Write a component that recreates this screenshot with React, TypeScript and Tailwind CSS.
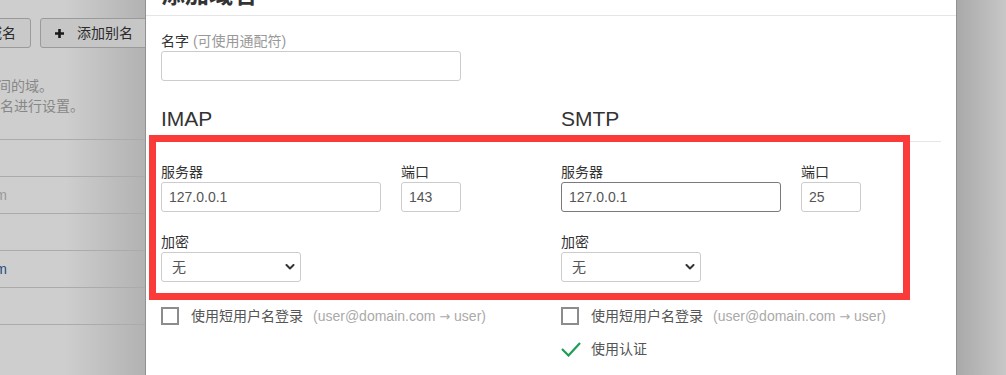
import React from 'react';

const font = "font-['Liberation_Sans','Noto_Sans_CJK_SC',sans-serif]";

function Chevron() {
  return (
    <svg width="10" height="6" viewBox="0 0 10 6" className="shrink-0">
      <path d="M1.5 1 L5 4.5 L8.5 1" fill="none" stroke="#333" strokeWidth="2" strokeLinecap="round" strokeLinejoin="round" />
    </svg>
  );
}

function TextInput({ value, width, dark }: { value?: string; width: string; dark?: boolean }) {
  return (
    <input
      readOnly
      value={value ?? ''}
      className={`${width} h-[30px] rounded-[3px] border ${dark ? 'border-[#7a7a7a]' : 'border-[#cccccc]'} bg-white pl-[7px] text-[14px] text-[#555] outline-none`}
    />
  );
}

function FakeSelect() {
  return (
    <div className="flex h-[30px] w-[140px] items-center justify-between rounded-[3px] border border-[#cccccc] bg-white pl-[10px] pr-[5px] text-[14px] text-[#555]">
      <span>无</span>
      <Chevron />
    </div>
  );
}

function ServerFields({ port, dark }: { port: string; dark?: boolean }) {
  return (
    <div className="flex flex-col">
      <div className="flex gap-[20px]">
        <div className="flex flex-col">
          <label className="leading-[20px] text-[14px] text-[#333]">服务器</label>
          <TextInput value="127.0.0.1" width="w-[220px]" dark={dark} />
        </div>
        <div className="flex flex-col">
          <label className="leading-[20px] text-[14px] text-[#333]">端口</label>
          <TextInput value={port} width="w-[60px]" />
        </div>
      </div>
      <label className="mt-[20px] leading-[20px] text-[14px] text-[#333]">加密</label>
      <FakeSelect />
    </div>
  );
}

function ShortLogin() {
  return (
    <div className="flex h-[20px] items-center text-[14px]">
      <span className="h-[18px] w-[18px] border-2 border-[#8c8c8c] bg-white" />
      <span className="ml-[12px] text-[#555]">使用短用户名登录</span>
      <span className="ml-[10px] whitespace-nowrap text-[#aaaaaa]">
        (user@domain.com <span className="font-['DejaVu_Sans',sans-serif] text-[13px]">→</span> user)
      </span>
    </div>
  );
}

function Backdrop() {
  const rows = [
    { text: '', color: '' },
    { text: 'postmaster@example.com', color: 'text-[#999]' },
    { text: '', color: '' },
    { text: 'admin@example.com', color: 'text-[#1e4e7c]' },
    { text: '', color: '' },
  ];
  return (
    <aside className="w-[145px] shrink-0 overflow-hidden bg-linear-to-r from-[#cecece] from-45% to-[#b2b2b2] text-[14px]">
      <div className="mt-[18px] flex h-[30px]">
        <div className="flex w-[31px] shrink-0 justify-end">
          <div className="flex h-[30px] shrink-0 items-center whitespace-nowrap rounded-[3px] border border-[#9a9a9a] bg-[#c9c9c9] pl-[12px] pr-[14px] text-[#2b2b2b]">
            <span className="mr-[8px] text-[15px] font-bold">+</span>添加域名
          </div>
        </div>
        <div className="ml-[9px] flex h-[30px] shrink-0 items-center whitespace-nowrap rounded-[3px] border border-[#9a9a9a] bg-[#c6c6c6] pl-[14px] pr-[14px] text-[#2b2b2b]">
          <svg width="9" height="9" viewBox="0 0 9 9" className="mr-[13px]">
            <path d="M4.5 0 V9 M0 4.5 H9" stroke="#1a1a1a" strokeWidth="2.6" />
          </svg>
          添加别名
        </div>
      </div>
      <div className="mt-[28px] flex w-[53px] justify-end whitespace-nowrap leading-[20px] text-[#878787]">
        别名会被转发到同一空间的域。
      </div>
      <div className="flex w-[84px] justify-end whitespace-nowrap leading-[20px] text-[#878787]">
        可以对每个域名进行设置。
      </div>
      <div className="mt-[23px] border-t border-[#ababab]">
        {rows.map((r, i) => (
          <div key={i} className="flex h-[37px] items-center border-b border-[#ababab]">
            <div className={`flex w-[7px] justify-end whitespace-nowrap ${r.color}`}>{r.text}</div>
          </div>
        ))}
      </div>
    </aside>
  );
}

export default function App() {
  return (
    <div className={`flex h-[375px] w-[1006px] overflow-hidden bg-[#cccccc] ${font}`}>
      <Backdrop />

      <main className="w-[812px] shrink-0 border-x border-[#919191] bg-white">
        <header className="-mt-[18px] border-b border-[#e5e5e5] px-[15px] pb-[7px]">
          <h4 className="text-[24px] font-bold leading-[26px] text-[#333]">添加域名</h4>
        </header>

        <div className="px-[15px] pt-[15px]">
          <label className="block leading-[20px] text-[14px] text-[#333]">
            名字 <span className="text-[#999]">(可使用通配符)</span>
          </label>
          <TextInput width="w-[300px]" />

          <div className="mt-[26px] grid grid-cols-[380px_380px] gap-x-[20px]">
            <h3 className="border-b border-[#e5e5e5] pb-[11px] text-[21px] leading-[23px] text-[#333]">IMAP</h3>
            <h3 className="border-b border-[#e5e5e5] pb-[11px] text-[21px] leading-[23px] text-[#333]">SMTP</h3>
          </div>

          <div className="-ml-[5px] grid w-[747px] grid-cols-[380px_1fr] gap-x-[20px] px-[5px] pb-[11px] pt-[20px] outline-[7px] outline-solid outline-[#fb3a3a]">
            <ServerFields port="143" />
            <ServerFields port="25" dark />
          </div>

          <div className="mt-[13px] grid grid-cols-[380px_380px] gap-x-[20px]">
            <ShortLogin />
            <ShortLogin />
          </div>

          <div className="mt-[13px] grid grid-cols-[380px_380px] gap-x-[20px]">
            <div />
            <div className="flex h-[20px] items-center text-[14px] text-[#555]">
              <svg width="20" height="16" viewBox="0 0 20 16" className="shrink-0">
                <path d="M1 8 L7.5 14.5 L19 2" fill="none" stroke="#1f9d57" strokeWidth="2.2" />
              </svg>
              <span className="ml-[10px]">使用认证</span>
            </div>
          </div>
        </div>
      </main>

      <div className="flex-1 bg-linear-to-r from-[#a9a9a9] to-[#c7c7c7]" />
    </div>
  );
}
